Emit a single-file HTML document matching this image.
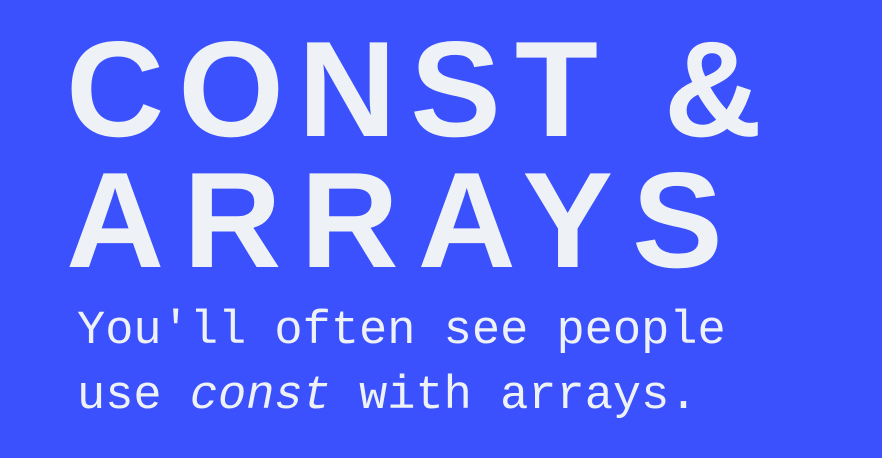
<!DOCTYPE html>
<html><head><style>
html,body{margin:0;padding:0;}
body{width:882px;height:458px;background:#3b51fe;overflow:hidden;position:relative;color:#eef2f6;}
.h{position:absolute;left:66px;font-family:"Liberation Sans",sans-serif;font-weight:bold;font-size:136px;line-height:1;white-space:nowrap;}
.s{position:absolute;left:77px;font-family:"Liberation Mono",monospace;font-size:47px;line-height:1;white-space:nowrap;}
</style></head><body>
<div class="h" style="top:21px;letter-spacing:14px">CONST &amp;</div>
<div class="h" style="top:152px;letter-spacing:19px">ARRAYS</div>
<div class="s" style="top:308px">You'll often see people</div>
<div class="s" style="top:373px">use <i>const</i> with arrays.</div>
</body></html>
